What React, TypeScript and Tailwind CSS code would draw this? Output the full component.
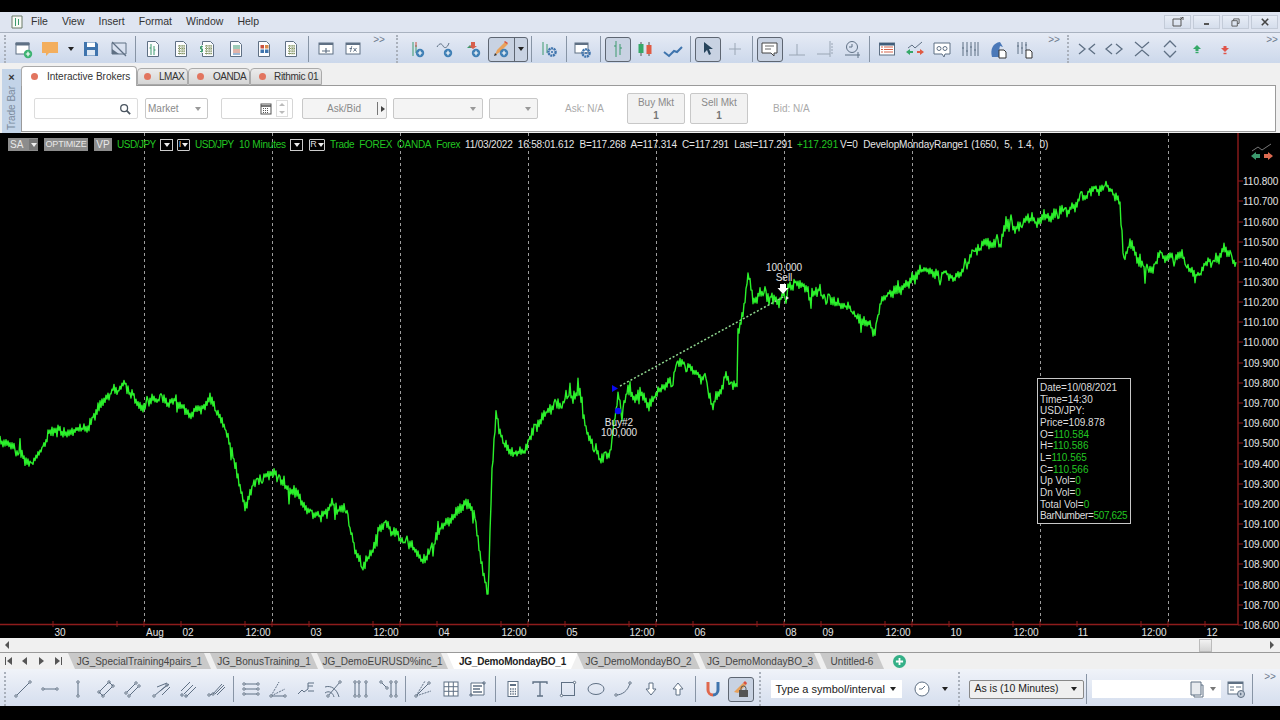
import React, { useMemo } from 'react';

const S = '#5f7084';
const FONT = "font-['Liberation_Sans',Arial,sans-serif]";

const I = ({ children }: { children: React.ReactNode }) => (
  <svg viewBox="0 0 20 20" className="h-5 w-5" fill="none" stroke={S} strokeWidth={1}>
    {children}
  </svg>
);

const Plus = ({ x = 14, y = 14, c = '#3f7fb5' }: { x?: number; y?: number; c?: string }) => (
  <g>
    <circle cx={x} cy={y} r={4.2} fill={c} stroke="none" />
    <path d={`M${x - 2.2} ${y}h4.4M${x} ${y - 2.2}v4.4`} stroke="#fff" strokeWidth={1.2} />
  </g>
);

const Gear = ({ x = 13, y = 13 }: { x?: number; y?: number }) => (
  <g>
    <circle cx={x} cy={y} r={3.6} fill="none" stroke="#3f74ad" strokeWidth={2.4} strokeDasharray="2 0.6" />
    <circle cx={x} cy={y} r={1.1} fill="#3f74ad" stroke="none" />
  </g>
);

const Doc = ({ children }: { children?: React.ReactNode }) => (
  <I>
    <path d="M4.5 2.5h8l3 3v12h-11z" fill="#fbfcfe" />
    {children}
  </I>
);

const Bars = () => (
  <g stroke="#3c9a6e">
    <path d="M8 5v11M11 7v9" />
    <path d="M6.5 9h1.5M11 11h1.5" />
  </g>
);

const Cells = () => (
  <path d="M7 7h7M7 9.5h7M7 12h7M7 14.5h7M8.5 6v9.5M11 6v9.5M13 6v9.5" stroke="#8a9a6a" strokeDasharray="1.4 .6" />
);

const Seg = ({ d }: { d: string }) => {
  const nums = d.split(' ').map(Number);
  return (
    <g>
      <path d={`M${nums[0]} ${nums[1]}L${nums[2]} ${nums[3]}`} />
      <circle cx={nums[0]} cy={nums[1]} r={1.2} fill="#fff" />
      <circle cx={nums[2]} cy={nums[3]} r={1.2} fill="#fff" />
    </g>
  );
};

const icons: Record<string, React.ReactNode> = {
  newWin: <I><rect x="3" y="4" width="13" height="11" fill="#fff" /><path d="M3 4h13v2H3z" fill={S} /><Plus x={15} y={15} c="#3cb371" /></I>,
  note: <I><path d="M1 3h16v11H8l-3 3v-3H1z" fill="#f3ae5d" stroke="none" /></I>,
  save: <I><path d="M3 3h12l2 2v12H3z" fill="#3f74ad" stroke="none" /><rect x="6" y="3.5" width="8" height="4.5" fill="#fff" stroke="none" /><rect x="6" y="11" width="8" height="5.5" fill="#dfe8f3" stroke="none" /></I>,
  noScreen: <I><path d="M3 4h14v11H3z" /><path d="M3 15h7l-7-5z" fill={S} stroke="none" /><path d="M3 3l14 14" strokeWidth={1.3} /></I>,
  d1: <Doc><Bars /></Doc>,
  d2: <Doc><Cells /></Doc>,
  d3: <Doc><Cells /><path d="M2 6h3v8H2z" fill="#fff" stroke="none" /><path d="M4.8 7.5H2.5v2.5h2v2.5H2M3.7 6.5v7" stroke="#3c9a6e" /></Doc>,
  d4: <Doc><path d="M7 7h7M7 9h7" stroke="#3f9a70" /><path d="M7 11h7M7 13h7" stroke="#c76a55" /><path d="M7 15h7" stroke="#3f74ad" /></Doc>,
  d5: <Doc><rect x="6.5" y="6" width="3.5" height="3.5" fill="#c9503e" stroke="none" /><rect x="11" y="6" width="3.5" height="3.5" fill="#d98a4a" stroke="none" /><rect x="6.5" y="10.5" width="3.5" height="3.5" fill="#3f74ad" stroke="none" /><rect x="11" y="10.5" width="3.5" height="3.5" fill="#3f74ad" stroke="none" /></Doc>,
  winBar: <I><rect x="3" y="4" width="14" height="11" fill="#fff" /><path d="M3 4h14v2H3z" fill={S} stroke="none" /><path d="M6 12h8M10 9v5" strokeWidth={1.2} /></I>,
  winFx: <I><rect x="3" y="4" width="14" height="11" fill="#fff" /><path d="M3 4h14v2H3z" fill={S} stroke="none" /><path d="M7 13c1 0 1-5 2-6M6.5 9.5h2.5M10.5 9l3 3.5M13.5 9l-3 3.5" /></I>,
  addBar: <I><g stroke="#3c9a6e"><path d="M6 3v14M9 6v8" /></g><path d="M9 3v5" stroke="#c9503e" /><Plus x={13} y={14} /></I>,
  addWave: <I><path d="M2 8c3-5 5-3 6-1s4 3 6-3" /><Plus x={13} y={14} /></I>,
  addStrat: <I><path d="M5 9l3-3 3 3z" fill="#3c9a6e" stroke="none" /><path d="M9 3h4v4h2l-4 3-4-3h2z" fill="#d75f4d" stroke="none" /><Plus x={14} y={14} /></I>,
  pencil: <I><path d="M4 16l2-5 8-8 3 2-8 8z" fill="#e8a15b" stroke="none" /><path d="M13 3l3 2 1-1-3-2z" fill="#d9503e" stroke="none" /><path d="M3 17l3-1-2-2z" fill="#333" stroke="none" /><Plus x={13} y={14} /></I>,
  barGear: <I><g stroke="#3c9a6e"><path d="M4 3v13M8 5v9" /></g><Gear x={13} y={13} /></I>,
  winGear: <I><rect x="2" y="4" width="13" height="10" fill="#fff" /><path d="M2 4h13v2H2z" fill={S} stroke="none" /><Gear x={13} y={14} /></I>,
  bars: <I><g stroke="#3c9a6e"><path d="M8 2v16M12 5v11" /><path d="M6 7h2M12 9h2" /></g></I>,
  candles: <I><path d="M6 3v14M14 3v14" stroke="#555" /><rect x="3.5" y="5" width="5" height="9" fill="#35a868" stroke="none" /><rect x="11.5" y="6" width="5" height="9" fill="#e05b43" stroke="none" /></I>,
  lineChart: <I><path d="M1 13l5 4 5-5 3 1 5-5" stroke="#3f74ad" strokeWidth={2} /></I>,
  arrow: <I><path d="M6 3l9 7h-4l2 5-2 1-2-5-3 3z" fill="#27445c" stroke="none" /></I>,
  cross: <I><path d="M10 4v12M4 10h12" stroke="#9aa6b5" /></I>,
  chat: <I><path d="M2 4h15v10h-3v3l-3-3H2z" fill="#fff" stroke="#444" /><path d="M5 7h9M5 10h6" stroke="#666" /></I>,
  xhair: <I><path d="M2 16h16M10 5v11" stroke="#9aa6b5" /></I>,
  xhairR: <I><path d="M2 15h13M15 2v16" stroke="#9aa6b5" /><path d="M16 5h2M16 8h2M16 11h2M16 14h2" stroke="#9aa6b5" /></I>,
  clockLine: <I><circle cx="9" cy="8" r="5.5" /><path d="M9 8V5M9 8H6" /><path d="M2 16h15M15 13v6" /></I>,
  table: <I><rect x="2.5" y="4" width="15" height="12" fill="#fff" /><path d="M2.5 4h15v2.5h-15z" fill="#3f5d7a" stroke="none" /><path d="M4 8h2M7 8h9M4 10.5h2M7 10.5h9M4 13h2M7 13h9" stroke="#d5664e" /></I>,
  trendArrows: <I><path d="M3 9l4-3 3 3 7-6" /><path d="M1 13l4-3v2h3v2H5v2z" fill="#35a868" stroke="none" /><path d="M19 13l-4-3v2h-3v2h3v2z" fill="#e05b43" stroke="none" /></I>,
  glasses: <I><path d="M2 4h16v11h-5l-1 3-2-3H2z" fill="#fff" /><circle cx="7" cy="9.5" r="2" /><circle cx="13" cy="9.5" r="2" /></I>,
  sliders: <I><path d="M3 3v14M7 3v14M11 3v14M15 3v14M18 3v14" /><path d="M2 9h2M6 12h2M10 8h2M14 11h2" /></I>,
  horse: <I><path d="M4 18c-2-8 1-14 8-15l3 5-3-1c-1 3-1 6 0 11z" fill="#4a78b8" stroke="none" /><path d="M11 11h5l2 2v6h-7z" fill="#fff" stroke="#333" /></I>,
  slidersDoc: <I><path d="M3 3v12M7 3v12M11 3v9" /><path d="M2 7h2M6 9h2M10 6h2" /><path d="M11 11h4l2 2v6h-6z" fill="#fff" stroke="#333" /></I>,
  in: <I><path d="M2 5l6 5-6 5M18 5l-6 5 6 5" strokeWidth={1.3} /></I>,
  out: <I><path d="M8 5l-6 5 6 5M12 5l6 5-6 5" strokeWidth={1.3} /></I>,
  vin: <I><path d="M3 3l7 6 7-6M3 17l7-6 7 6" strokeWidth={1.3} /></I>,
  vout: <I><path d="M4 8l6-6 6 6M4 12l6 6 6-6" strokeWidth={1.3} /></I>,
  up: <I><path d="M10 6l4 4h-2.500v2h-3v-2H6z" fill="#35a868" stroke="none" /><path d="M8.500 13.500h3" stroke="#35a868" strokeWidth={1.4} /></I>,
  down: <I><path d="M10 13l4-4h-2.500V7h-3v2H6z" fill="#e0544a" stroke="none" /><path d="M8.500 14.500h3" stroke="#e0544a" strokeWidth={1.4} /></I>,
  line: <I><Seg d="3 17 17 3" /></I>,
  hline: <I><Seg d="3 10 17 10" /></I>,
  vline: <I><Seg d="10 3 10 17" /></I>,
  channel: <I><Seg d="3 13 13 3" /><Seg d="7 17 17 7" /><path d="M3 13l4 4M13 3l4 4" /></I>,
  channel2: <I><Seg d="3 14 13 4" /><Seg d="6 17 16 7" /></I>,
  fork: <I><Seg d="3 17 16 6" /><path d="M6 8l10-4M9 12l9-7M11 16l8-8" /></I>,
  gann: <I><path d="M3 12l9-9M6 15l9-9M9 17l9-9" /><circle cx="4" cy="16" r="1.2" /><circle cx="8" cy="17" r="1.2" /></I>,
  gann2: <I><Seg d="3 16 7 15" /><path d="M7 15l9-10M9 15l9-9M11 16l8-8" /></I>,
  levels: <I><Seg d="3 5 17 5" /><Seg d="3 10 17 10" /><Seg d="3 15 17 15" /></I>,
  fan: <I><path d="M3 17L11 3" strokeDasharray="2 1" /><path d="M3 17l14-7" strokeDasharray="2 1" /><Seg d="3 17 17 17" /></I>,
  wave: <I><path d="M2 15l4-4 2 2 4-3" /><path d="M18 4h-6v6M12 7h5M12 12h6" /></I>,
  arcs: <I><path d="M2 8c6-2 12 2 14 10M2 14c4-3 8 0 9 4" /><Seg d="5 17 17 3" /></I>,
  parallel: <I><Seg d="4 3 4 17" /><Seg d="8 3 8 17" /><Seg d="15 3 15 17" /></I>,
  parallel2: <I><Seg d="2 3 8 9" /><Seg d="12 3 12 17" /><Seg d="17 3 17 17" /></I>,
  pitch: <I><path d="M3 17L12 2" strokeDasharray="2 1" /><path d="M3 17l15-5" strokeDasharray="2 1" /><Seg d="3 17 16 4" /></I>,
  grid: <I><rect x="3" y="3" width="14" height="14" fill="#fff" /><path d="M3 7.7h14M3 12.3h14M7.7 3v14M12.3 3v14" /></I>,
  gridList: <I><path d="M3 4h13v12H3z" fill="#fff" /><path d="M5 7h9M5 10h7M5 13h9" strokeWidth={1.4} /><circle cx="16" cy="4" r="1.2" /><circle cx="3" cy="16" r="1.2" /></I>,
  calc: <I><rect x="5" y="2.5" width="10" height="15" fill="#fff" /><path d="M7 5h6v2H7z" fill={S} stroke="none" /><path d="M7 10h6M7 12.5h6M7 15h6" strokeDasharray="1.4 1" strokeWidth={1.4} /></I>,
  text: <I><path d="M3 5V3h14v2M10 3v14M7 17h6" strokeWidth={1.3} /></I>,
  rect: <I><rect x="3.5" y="3.5" width="13" height="13" /><circle cx="3.5" cy="16.5" r="1.2" fill="#fff" /><circle cx="16.5" cy="3.5" r="1.2" fill="#fff" /></I>,
  ellipse: <I><ellipse cx="10" cy="10" rx="8" ry="5.5" /></I>,
  arc: <I><path d="M3 16c6 0 12-4 14-12" /><circle cx="3" cy="16" r="1.2" fill="#fff" /><circle cx="17" cy="4" r="1.2" fill="#fff" /></I>,
  arrDown: <I><path d="M8 4h4v6h3l-5 6-5-6h3z" fill="#fff" /></I>,
  arrUp: <I><path d="M8 16h4v-6h3l-5-6-5 6h3z" fill="#fff" /></I>,
  magnet: <I><path d="M5 3v8a5 5 0 0 0 5 5" stroke="#e0684d" strokeWidth={3} /><path d="M15 3v8a5 5 0 0 1-5 5" stroke="#3f74ad" strokeWidth={3} /></I>,
  lock: <I><path d="M3 13l9-9 3 2-8 8z" fill="#e8a15b" stroke="none" /><path d="M12 4l3 2 1-2-2-2z" fill="#d9503e" stroke="none" /><rect x="8" y="11" width="9" height="7" fill="#555" stroke="none" /><path d="M10 11V9.5a2.5 2.5 0 0 1 5 0V11" stroke="#555" /></I>,
  clock: <I><circle cx="10" cy="10" r="7" fill="#fff" /><path d="M10 10l3-3M10 10H7" /></I>,
  docCaret: <I><path d="M3 3h10v13H3z" fill="#e8ebef" /><path d="M13 6h2v12H6v-2" /></I>,
  tableGo: <I><rect x="2" y="3" width="15" height="12" fill="#fff" /><path d="M2 3h15v2H2z" fill={S} stroke="none" /><path d="M4 8h4M4 11h4M10 8h5" /><circle cx="15" cy="15" r="3.5" fill="#c3ccd8" /><path d="M14 13.5l2 1.5-2 1.5z" fill={S} stroke="none" /></I>,
};

const Slot = ({ n, active }: { n: string; active?: boolean }) => (
  <div className="flex h-[26px] w-[27.6px] shrink-0 items-center justify-center">
    <div className={active ? 'flex h-[25px] w-[26px] items-center justify-center rounded-[3px] border border-[#5e6672] bg-[#c8d2e2]' : 'flex items-center justify-center'}>
      {icons[n]}
    </div>
  </div>
);

const Row = ({ names }: { names: string[] }) => (
  <>
    {names.map((n, i) => (
      <Slot key={i} n={n} />
    ))}
  </>
);

const Sep = () => (
  <div className="flex h-[26px] w-[7px] shrink-0 justify-center">
    <div className="h-full w-px bg-[#8794a5]" />
  </div>
);

const Grip = ({ w }: { w: string }) => (
  <div className={`flex h-full shrink-0 justify-center ${w}`}>
    <div className="h-full w-0.5 border-l-2 border-dotted border-[#a9b0bb]" />
  </div>
);

const Caret = ({ c = 'border-t-[#222]' }: { c?: string }) => (
  <div className={`h-0 w-0 border-x-[3.5px] border-t-[4px] border-x-transparent ${c}`} />
);

const More = ({ w }: { w: string }) => (
  <div className={`h-full shrink-0 text-center text-[10px] leading-none text-[#6e7c8e] ${w}`}>&gt;&gt;</div>
);

const TopToolbar = () => (
  <div className="flex h-[31px] items-center border-t border-[#a9b2c0] bg-gradient-to-b from-[#e6ebf5] to-[#ccd8eb] pt-[2px]">
    <Grip w="w-[9px]" />
    <Slot n="newWin" />
    <div className="w-px" />
    <Slot n="note" />
    <div className="flex w-[12px] justify-center"><Caret /></div>
    <Slot n="save" />
    <Slot n="noScreen" />
    <Sep />
    <Row names={['d1', 'd2', 'd3', 'd4', 'd5', 'd2']} />
    <Sep />
    <Row names={['winBar', 'winFx']} />
    <More w="w-[24px]" />
    <Grip w="w-[12px]" />
    <Row names={['addBar', 'addWave', 'addStrat']} />
    <div className="ml-[2px] flex h-[25px] w-[40px] shrink-0 rounded-[3px] border border-[#5e6672] bg-[#c8d2e2]">
      <div className="flex flex-1 items-center justify-center border-r border-[#5e6672]">{icons.pencil}</div>
      <div className="flex w-[12px] items-center justify-center"><Caret /></div>
    </div>
    <Sep />
    <Slot n="barGear" />
    <Sep />
    <Slot n="winGear" />
    <Sep />
    <Slot n="bars" active />
    <Row names={['candles', 'lineChart']} />
    <Sep />
    <Slot n="arrow" active />
    <Slot n="cross" />
    <Sep />
    <Slot n="chat" active />
    <Row names={['xhair', 'xhairR', 'clockLine']} />
    <Sep />
    <Row names={['table', 'trendArrows', 'glasses', 'sliders', 'horse', 'slidersDoc']} />
    <More w="ml-[2px] w-[26px]" />
    <Grip w="w-[2px]" />
    <div className="w-[4px]" />
    <Row names={['in', 'out', 'vin', 'vout', 'up', 'down']} />
    <More w="ml-auto w-[16px]" />
  </div>
);

const TradeTabs = () => (
  <div className="flex h-[20px] items-end text-[10px] text-[#333]">
    <div className="z-10 -mb-px flex h-[20px] w-[116px] items-center gap-[9px] rounded-t-sm border border-b-0 border-[#aaa] bg-white pl-[9px]">
      <span className="h-[7px] w-[7px] shrink-0 rounded-full bg-[#e2755f]" />
      <span className="whitespace-nowrap">Interactive Brokers</span>
    </div>
    <div className="flex h-[17px] w-[51px] items-center gap-[8px] rounded-t-sm border border-[#aaa] bg-gradient-to-b from-[#ececec] to-[#d5d5d5] pl-[6px]">
      <span className="h-[7px] w-[7px] shrink-0 rounded-full bg-[#e2755f]" />
      <span className="whitespace-nowrap tracking-[-0.5px]">LMAX</span>
    </div>
    <div className="flex h-[17px] w-[62px] items-center gap-[9px] rounded-t-sm border border-[#aaa] bg-gradient-to-b from-[#ececec] to-[#d5d5d5] pl-[8px]">
      <span className="h-[7px] w-[7px] shrink-0 rounded-full bg-[#e2755f]" />
      <span className="whitespace-nowrap tracking-[-0.5px]">OANDA</span>
    </div>
    <div className="flex h-[17px] w-[72px] items-center gap-[8px] rounded-t-sm border border-[#aaa] bg-gradient-to-b from-[#ececec] to-[#d5d5d5] pl-[8px]">
      <span className="h-[7px] w-[7px] shrink-0 rounded-full bg-[#e2755f]" />
      <span className="whitespace-nowrap tracking-[-0.3px]">Rithmic 01</span>
    </div>
  </div>
);

const TradeBar = () => (
  <div className="flex h-[68px] bg-[#f0f0f0]">
    <div className="ml-0.5 mt-1 flex w-[19px] flex-col items-center bg-[#c3d4e8]">
      <span className="mt-[2px] text-[11px] font-bold leading-[12px] text-[#333]">×</span>
      <span className="mt-[3px] rotate-180 whitespace-nowrap text-[10px] leading-none text-[#7a8a9c] [writing-mode:vertical-rl]">Trade Bar</span>
    </div>
    <div className="flex min-w-0 flex-1 flex-col pr-1">
      <TradeTabs />
      <div className="flex h-[47px] items-center border border-[#9a9a9a] bg-white pl-[12px] text-[10px] text-[#8a8a8a]">
        <div className="flex h-[21px] w-[104px] items-center justify-end rounded-[2px] border border-[#dcdcdc] pr-1.5">
          <svg viewBox="0 0 14 14" className="h-3 w-3" fill="none" stroke="#4a5560" strokeWidth={1.5}><circle cx="6" cy="6" r="4" /><path d="M9 9l4 4" strokeWidth={2} /></svg>
        </div>
        <div className="ml-[7px] flex h-[21px] w-[63px] items-center justify-between rounded-[2px] border border-[#c8c8c8] px-0.5 pr-1.5">
          <span>Market</span><Caret c="border-t-[#999]" />
        </div>
        <div className="ml-[13px] flex h-[21px] w-[72px] items-center justify-end gap-1 rounded-[2px] border border-[#d6d6d6] pr-1">
          <svg viewBox="0 0 12 12" className="h-3 w-3" fill="none" stroke="#555"><rect x="1" y="1" width="10" height="10" /><path d="M1 3h10" strokeWidth={1.6} /><path d="M3 5.5h6M3 7.5h6M3 9.5h6" strokeDasharray="1 1" /></svg>
          <div className="flex h-[17px] w-[12px] flex-col items-center justify-around border border-[#ddd]">
            <div className="h-0 w-0 border-x-[3px] border-b-[3px] border-x-transparent border-b-[#bbb]" />
            <div className="h-0 w-0 border-x-[3px] border-t-[3px] border-x-transparent border-t-[#bbb]" />
          </div>
        </div>
        <div className="ml-[9px] flex h-[21px] w-[85px] items-center rounded-[2px] border border-[#c8c8c8] bg-[#f4f4f4]">
          <span className="flex-1 pl-2 text-center">Ask/Bid</span>
          <div className="flex h-[13px] w-[9px] items-center justify-end border-l border-[#777]">
            <div className="mr-px h-0 w-0 border-y-[3px] border-l-[4px] border-y-transparent border-l-[#444]" />
          </div>
        </div>
        <div className="ml-[6px] flex h-[21px] w-[90px] items-center justify-end rounded-[2px] border border-[#c8c8c8] bg-[#f4f4f4] pr-1.5"><Caret c="border-t-[#999]" /></div>
        <div className="ml-[6px] flex h-[21px] w-[49px] items-center justify-end rounded-[2px] border border-[#c8c8c8] bg-[#f4f4f4] pr-1.5"><Caret c="border-t-[#999]" /></div>
        <span className="ml-[27px] w-[62px] whitespace-nowrap text-[#aaa]">Ask: N/A</span>
        <div className="flex h-[31px] w-[58px] flex-col items-center justify-center rounded-[2px] border border-[#c8c8c8] bg-[#f2f2f2] leading-[13px]">
          <span>Buy Mkt</span><span className="font-bold text-[#777]">1</span>
        </div>
        <div className="ml-[5px] flex h-[31px] w-[58px] flex-col items-center justify-center rounded-[2px] border border-[#c8c8c8] bg-[#f2f2f2] leading-[13px]">
          <span>Sell Mkt</span><span className="font-bold text-[#777]">1</span>
        </div>
        <span className="ml-[25px] whitespace-nowrap text-[#aaa]">Bid: N/A</span>
      </div>
    </div>
  </div>
);

const waypoints: [number, number][] = [
  [0, 442], [15, 450], [32, 468], [50, 440], [70, 430], [85, 425], [105, 395], [125, 380], [145, 410], [165, 400], [185, 412], [210, 405], [225, 435], [235, 465], [245, 505], [265, 475], [290, 490], [320, 515], [345, 510], [362, 568], [385, 520], [405, 535], [425, 555], [445, 520], [465, 498], [475, 515], [483, 575], [488, 598], [492, 470], [496, 420], [505, 450], [525, 450], [550, 405], [580, 397], [587, 430], [603, 450], [610, 447], [618, 393], [622, 407], [628, 387], [635, 393], [640, 385], [648, 397], [655, 387], [670, 387], [672, 393], [675, 368], [683, 367], [695, 372], [700, 380], [707, 377], [708, 390], [713, 402], [718, 393], [725, 377], [737, 385], [738, 333], [742, 310], [748, 273], [753, 293], [757, 300], [760, 287], [773, 300], [778, 302], [790, 287], [802, 280], [810, 300], [820, 297], [835, 305], [850, 312], [870, 325], [875, 335], [882, 290], [900, 285], [930, 270], [960, 275], [985, 240], [1000, 250], [1010, 225], [1040, 228], [1060, 212], [1085, 200], [1105, 183], [1120, 205], [1124, 260], [1130, 240], [1147, 278], [1160, 255], [1185, 262], [1195, 275], [1225, 255], [1237, 268],
];

function buildLine() {
  let seed = 4711;
  const rnd = () => {
    seed = (seed * 16807) % 2147483647;
    return seed / 2147483647;
  };
  const out: string[] = [];
  let walk = 0;
  let dir = 1;
  for (let i = 0; i < waypoints.length - 1; i++) {
    const [x0, y0] = waypoints[i];
    const [x1, y1] = waypoints[i + 1];
    const steps = Math.max(1, Math.round(x1 - x0));
    for (let s = 0; s < steps; s++) {
      const t = s / steps;
      walk = walk * 0.9 + (rnd() - 0.5) * 6;
      dir = -dir;
      const spike = rnd() > 0.9 ? (rnd() - 0.5) * 22 : 0;
      const n = walk + dir * (1 + rnd() * 3.5) + spike;
      out.push(`${(x0 + (x1 - x0) * t).toFixed(1)},${(y0 + (y1 - y0) * t + n).toFixed(1)}`);
    }
  }
  return out.join(' ');
}

const gridX = [144, 272, 400, 528, 656, 784, 912, 1040, 1168];
const prices: [string, number][] = [
  ['110.800', 181], ['110.700', 201], ['110.600', 222], ['110.500', 242], ['110.400', 262], ['110.300', 282], ['110.200', 302], ['110.100', 322], ['110.000', 342], ['109.900', 363], ['109.800', 383], ['109.700', 403], ['109.600', 423], ['109.500', 443], ['109.400', 464], ['109.300', 484], ['109.200', 504], ['109.100', 524], ['109.000', 544], ['108.900', 564], ['108.800', 585], ['108.700', 605], ['108.600', 625],
];
const times: [string, number][] = [
  ['30', 60], ['Aug', 155], ['02', 188], ['12:00', 258], ['03', 316], ['12:00', 386], ['04', 444], ['12:00', 514], ['05', 572], ['12:00', 642], ['06', 700], ['08', 791], ['09', 828], ['12:00', 898], ['10', 956], ['12:00', 1026], ['11', 1083], ['12:00', 1154], ['12', 1212],
];

const Box = ({ children }: { children: React.ReactNode }) => (
  <span className="flex h-[12px] items-center justify-center gap-px rounded-[1px] border border-[#ccc] px-0.5 text-[9px] leading-none text-[#ddd]">{children}</span>
);

const SmallCaret = () => <span className="flex h-[12px] w-[13px] items-center justify-center border border-[#ccc] bg-black"><Caret c="border-t-[#eee]" /></span>;

const StatusLine = () => (
  <div className="absolute left-[8px] top-[5px] flex h-[13px] items-center whitespace-nowrap text-[10px] leading-none text-[#22c622]">
    <span className="flex h-[13px] w-[30px] items-center justify-between bg-[#8c8c8c] pl-0.5 text-[#e8e8e8]">SA<span className="flex h-[11px] w-[9px] items-center justify-center bg-[#777]"><Caret c="border-t-[#eee]" /></span></span>
    <span className="ml-[6px] flex h-[13px] w-[44px] items-center justify-center bg-[#8c8c8c] text-[9px] tracking-[-0.2px] text-[#e8e8e8]">OPTIMIZE</span>
    <span className="ml-[6px] flex h-[13px] w-[18px] items-center justify-center bg-[#8c8c8c] text-[#e8e8e8]">VP</span>
    <span className="ml-[5px] w-[38px] tracking-[-0.5px]">USD/JPY</span>
    <span className="ml-[5px]"><SmallCaret /></span>
    <span className="ml-[4px] w-[13px]"><Box>I<Caret c="border-t-[#eee]" /></Box></span>
    <span className="ml-[5px] w-[38px] tracking-[-0.5px]">USD/JPY</span>
    <span className="ml-[6px] w-[46px] tracking-[-0.2px]">10 Minutes</span>
    <span className="ml-[5px]"><SmallCaret /></span>
    <span className="ml-[6px] w-[16px]"><Box>R<Caret c="border-t-[#eee]" /></Box></span>
    <span className="ml-[5px] w-[135px] tracking-[-0.3px]">Trade&nbsp; FOREX&nbsp; OANDA&nbsp; Forex</span>
    <span className="w-[332px] tracking-[-0.17px] text-[#e6e6e6]">11/03/2022&nbsp; 16:58:01.612&nbsp; B=117.268&nbsp; A=117.314&nbsp; C=117.291&nbsp; Last=117.291</span>
    <span className="w-[43px]">+117.291</span>
    <span className="tracking-[-0.1px] text-[#e6e6e6]">V=0&nbsp; DevelopMondayRange1 (1650,&nbsp; 5,&nbsp; 1.4,&nbsp; 0)</span>
  </div>
);

const info: [string, string][] = [
  ['Date=10/08/2021', ''], ['Time=14:30', ''], ['USD/JPY:', ''], ['Price=109.878', ''], ['O=', '110.584'], ['H=', '110.586'], ['L=', '110.565'], ['C=', '110.566'], ['Up Vol=', '0'], ['Dn Vol=', '0'], ['Total Vol=', '0'], ['BarNumber=', '507,625'],
];

const Chart = () => {
  const line = useMemo(buildLine, []);
  return (
    <div className="relative h-[505px] overflow-hidden bg-black">
      <svg viewBox="0 133 1280 505" className="block h-[505px] w-[1280px]">
        {gridX.map((x) => (
          <line key={x} x1={x + 0.5} x2={x + 0.5} y1={133} y2={624} stroke="#9c9c9c" strokeDasharray="3 3" />
        ))}
        <polyline points={line} fill="none" stroke="#2bf02b" strokeWidth={1.4} strokeLinejoin="round" />
        <line x1={620} y1={386} x2={785} y2={296} stroke="#8fd88f" strokeWidth={1.5} strokeDasharray="2 2" />
        <path d="M612 385l6 3.500-6 3.500z" fill="#0a0af0" />
        <circle cx={618} cy={411} r={3.2} fill="#0a0af0" />
        <path d="M780 284h6v4h2.500l-5.500 6-5.500-6h2.500z" fill="#fff" />
        <path d="M786 296l3 2-3 2z" fill="#eee" />
        <g fill="#e4e4e4" fontSize={10} textAnchor="middle" fontFamily="Liberation Sans, Arial, sans-serif">
          <text x={619} y={426}>Buy#2</text>
          <text x={619} y={436}>100,000</text>
          <text x={784} y={271}>100,000</text>
          <text x={784} y={281}>Sell</text>
        </g>
        <path d="M1238 133v491.500H0" fill="none" stroke="#8e1c1c" strokeWidth={1.4} />
        {prices.map(([p, y]) => (
          <g key={p}>
            <line x1={1238} x2={1243} y1={y} y2={y} stroke="#8e1c1c" />
            <text x={1243} y={y + 3.5} fill="#e4e4e4" fontSize={10} fontFamily="Liberation Sans, Arial, sans-serif">{p}</text>
          </g>
        ))}
        {gridX.concat([53, 117, 181, 245, 309, 373, 437, 501, 565, 629, 693, 757, 821, 885, 949, 1013, 1077, 1141, 1205]).map((x) => (
          <line key={x} x1={x} x2={x} y1={621} y2={627} stroke="#8e1c1c" />
        ))}
        {times.map(([t, x], i) => (
          <text key={i} x={x} y={636} fill="#e4e4e4" fontSize={10} textAnchor="middle" fontFamily="Liberation Sans, Arial, sans-serif">{t}</text>
        ))}
        <g transform="translate(1251 143)" fill="none" stroke="#777" strokeWidth={1}>
          <path d="M1 8l6-4 4 3 9-6" />
          <path d="M0 13l5-4v2h4v4H5v2z" fill="#3c9a6e" stroke="none" />
          <path d="M22 13l-5-4v2h-4v4h4v2z" fill="#dd6a50" stroke="none" />
        </g>
      </svg>
      <StatusLine />
      <div className="absolute left-[1037px] top-[245px] h-[146px] w-[94px] border border-[#c8c8c8] bg-black px-[2px] py-[3px] text-[10px] leading-[11.65px] text-[#dcdcdc]">
        {info.map(([k, v]) => (
          <div key={k} className={k === 'BarNumber=' ? 'whitespace-nowrap tracking-[-0.35px]' : 'whitespace-nowrap'}>{k}<span className="text-[#22c622]">{v}</span></div>
        ))}
      </div>
    </div>
  );
};

const sheets = ['JG_SpecialTraining4pairs_1', 'JG_BonusTraining_1', 'JG_DemoEURUSD%inc_1', 'JG_DemoMondayBO_1', 'JG_DemoMondayBO_2', 'JG_DemoMondayBO_3', 'Untitled-6'];
const sheetWidths = ['w-[143px]', 'w-[108px]', 'w-[131px]', 'w-[131px]', 'w-[123px]', 'w-[122px]', 'w-[64px]'];

const NavArrow = ({ left, bar }: { left?: boolean; bar?: boolean }) => (
  <div className="flex w-[16.6px] items-center justify-center gap-px">
    {bar && left && <div className="h-[8px] w-px bg-[#555]" />}
    <div className={left ? 'h-0 w-0 border-y-[4px] border-r-[5px] border-y-transparent border-r-[#555]' : 'h-0 w-0 border-y-[4px] border-l-[5px] border-y-transparent border-l-[#555]'} />
    {bar && !left && <div className="h-[8px] w-px bg-[#555]" />}
  </div>
);

const SheetTabs = () => (
  <div className="flex h-[16px] items-center bg-[#f0f0f0]">
    <div className="flex w-[69px] justify-start">
      <NavArrow left bar />
      <NavArrow left />
      <NavArrow />
      <NavArrow bar />
    </div>
    {sheets.map((s, i) => (
      <div
        key={s}
        className={
          i === 3
            ? `-ml-[1px] flex h-full shrink-0 items-center justify-center bg-white text-[10px] font-bold tracking-[-0.2px] text-[#222] [clip-path:polygon(0_0,100%_0,calc(100%-7px)_100%,7px_100%)] ${sheetWidths[i]}`
            : `-ml-[1px] flex h-full shrink-0 items-center justify-center bg-[#c9c9c9] text-[10px] text-[#444] [clip-path:polygon(0_0,calc(100%-7px)_0,100%_100%,7px_100%)] ${sheetWidths[i]}`
        }
      >
        <span className="whitespace-nowrap">{s}</span>
      </div>
    ))}
    <div className="ml-[9px] flex h-[13px] w-[13px] items-center justify-center rounded-full bg-[#35b087]">
      <svg viewBox="0 0 10 10" className="h-[9px] w-[9px]" stroke="#fff" strokeWidth={2}><path d="M5 1v8M1 5h8" /></svg>
    </div>
  </div>
);

const BottomToolbar = () => (
  <div className="flex h-[37px] items-center bg-gradient-to-b from-[#f0f3f9] to-[#d5deee] pt-[3px] text-[10.5px] text-[#222]">
    <Grip w="w-[9px]" />
    <Row names={['line', 'hline', 'vline', 'channel', 'channel2', 'fork', 'gann', 'gann2']} />
    <Sep />
    <Row names={['levels', 'fan', 'wave', 'arcs', 'parallel', 'parallel2']} />
    <Sep />
    <Row names={['pitch', 'grid', 'gridList']} />
    <Sep />
    <Row names={['calc', 'text', 'rect', 'ellipse', 'arc', 'arrDown', 'arrUp']} />
    <Sep />
    <Slot n="magnet" />
    <Slot n="lock" active />
    <Grip w="w-[11px]" />
    <div className="ml-[6px] flex h-[18px] w-[131px] shrink-0 items-center justify-between bg-white pl-1 pr-1.5 text-[11px]">
      <span className="whitespace-nowrap">Type a symbol/interval</span><Caret />
    </div>
    <div className="ml-[10px] flex w-[20px] justify-center">{icons.clock}</div>
    <div className="ml-[10px] flex w-[6px] justify-center"><Caret /></div>
    <Grip w="w-[21px]" />
    <div className="flex h-[19px] w-[115px] shrink-0 items-center justify-between rounded-[2px] border border-[#888] bg-[#efefef] pl-1 pr-1.5">
      <span className="whitespace-nowrap">As is (10 Minutes)</span><Caret />
    </div>
    <div className="mx-[2px] h-[30px] w-px bg-[#8794a5]" />
    <div className="ml-[3px] flex h-[18px] w-[129px] shrink-0 items-center justify-end gap-0.5 bg-white pr-[5px]">
      {icons.docCaret}<Caret c="border-t-[#777]" />
    </div>
    <div className="ml-[5px] flex w-[20px] justify-center">{icons.tableGo}</div>
    <div className="ml-[6px] h-[30px] w-px bg-[#8794a5]" />
    <More w="ml-auto w-[20px]" />
  </div>
);

const WinBtn = ({ children }: { children: React.ReactNode }) => (
  <div className="flex h-[14px] w-[27px] items-center justify-center border border-[#c3cbd8] bg-gradient-to-b from-[#e8edf6] to-[#d5deec]">{children}</div>
);

const App = () => (
  <div className={`h-[720px] w-[1280px] overflow-hidden bg-black ${FONT}`}>
    <div className="h-[12px]" />
    <div className="flex h-[20px] items-center bg-[#dfe5f1] pl-[10px] text-[10.5px] text-[#333]">
      <svg viewBox="0 0 14 14" className="h-[14px] w-[14px]" fill="#f8faf6" stroke="#6a7a68"><path d="M2 1h10v12H2z" /><path d="M5.5 3v8M8.5 4v6" stroke="#3c9a6e" /></svg>
      <div className="ml-[7px] flex gap-[14px]">
        {['File', 'View', 'Insert', 'Format', 'Window', 'Help'].map((m) => (
          <span key={m}>{m}</span>
        ))}
      </div>
      <div className="ml-auto mr-[2px] flex gap-[2px]">
        <WinBtn><svg viewBox="0 0 12 10" className="h-[10px] w-[12px]" fill="none" stroke="#555"><path d="M1 2h8v7H1zM8 0l3 0v3M11 0L8 3" /></svg></WinBtn>
        <WinBtn><div className="mt-1 h-0.5 w-[5px] bg-[#555]" /></WinBtn>
        <WinBtn><svg viewBox="0 0 10 10" className="h-[9px] w-[9px]" fill="none" stroke="#555"><path d="M3 3V1h6v5H7M1 3h6v6H1z" /></svg></WinBtn>
        <WinBtn><svg viewBox="0 0 10 10" className="h-[8px] w-[8px]" fill="none" stroke="#444" strokeWidth={2}><path d="M1 1l8 8M9 1l-8 8" /></svg></WinBtn>
      </div>
    </div>
    <TopToolbar />
    <div className="h-[2px] bg-[#f0f0f0]" />
    <TradeBar />
    <Chart />
    <div className="flex h-[15px] items-center justify-between border-b border-[#9a9a9a] bg-[#f0f0f0] pl-[5px] pr-[6px]">
      <div className="h-0 w-0 border-y-[4px] border-r-[4px] border-y-transparent border-r-[#555]" />
      <div className="ml-auto mr-[58px] h-[13px] w-[13px] border border-[#bbb] bg-gradient-to-b from-[#f2f2f2] to-[#d4d4d4]" />
      <div className="h-0 w-0 border-y-[4px] border-l-[4px] border-y-transparent border-l-[#555]" />
    </div>
    <SheetTabs />
    <BottomToolbar />
  </div>
);

export default App;
